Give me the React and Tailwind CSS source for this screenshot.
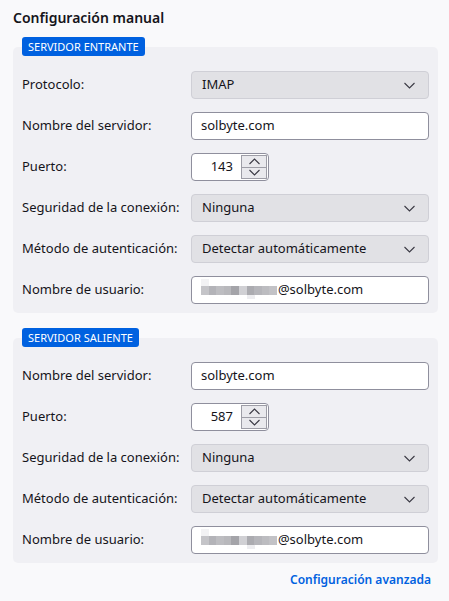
import React from "react";

const font = { fontFamily: '"Noto Sans", "Open Sans", sans-serif' };

function Chevron({ up = false, className = "" }) {
  return (
    <svg width="11" height="7" viewBox="0 0 11 7" className={className} fill="none">
      <path
        d={up ? "M0.5 6 L5.5 1 L10.5 6" : "M0.5 1 L5.5 6 L10.5 1"}
        stroke="#3a3944"
        strokeWidth="1.1"
      />
    </svg>
  );
}

function Select({ value }) {
  return (
    <div className="flex h-[28px] w-[238px] items-center justify-between rounded-[4px] border border-[#cfcfd6] bg-[#e1e1e5] pl-[10px] pr-[13px] text-[13px] text-[#15141a]">
      <span>{value}</span>
      <Chevron />
    </div>
  );
}

function TextInput({ children }) {
  return (
    <div className="flex h-[28px] w-[238px] items-center rounded-[4px] border border-[#8f8f9d] bg-white pl-[9px] text-[13px] text-[#15141a]">
      {children}
    </div>
  );
}

function NumberInput({ value }) {
  return (
    <div className="flex h-[28px] w-[78px] items-center rounded-[4px] border border-[#8f8f9d] bg-white">
      <span className="w-[41px] text-right text-[13px] text-[#15141a]">{value}</span>
      <div className="ml-[8px] flex h-[24px] w-[26px] flex-col border border-[#9d9da6]">
        <div className="flex flex-1 items-center justify-center border-b border-[#9d9da6] bg-[#e9e9ed]">
          <Chevron up />
        </div>
        <div className="flex flex-1 items-center justify-center bg-[#e9e9ed]">
          <Chevron />
        </div>
      </div>
    </div>
  );
}

// pixelated block standing in for the hidden local part of the address
function Masked() {
  const shades = ["#c4c4c8", "#b3b3b8", "#bdbdc1", "#b8b8bc", "#a4a4a9", "#d0d0d4", "#ababb0", "#b5b5ba", "#bcbcc0", "#c2c2c6"];
  return (
    <span className="relative mr-[1px] inline-flex h-[9px]">
      {shades.map((c, i) => (
        <span key={i} className="h-[9px] w-[7.6px]" style={{ backgroundColor: c }} />
      ))}
      <span className="absolute left-0 top-[-7px] h-[7px] w-[8px] bg-[#f2f2f4]" />
      <span className="absolute left-[46px] top-[9px] h-[4px] w-[8px] bg-[#ededf0]" />
    </span>
  );
}

function Row({ label, children }) {
  return (
    <div className="flex h-[28px] items-center">
      <div className="w-[169px] text-[13px] text-[#15141a]">{label}</div>
      {children}
    </div>
  );
}

function Group({ title, children, first }) {
  return (
    <section className={first ? "" : "mt-[15px]"}>
      <div className="relative z-10 ml-[22px] flex h-[19px] w-fit items-center rounded-[3px] bg-[#0061e0] px-[6px] text-[11px] leading-none text-white">
        {title}
      </div>
      <div className="-mt-[9px] ml-[13px] flex w-[425px] flex-col gap-[13px] rounded-[5px] bg-[#f0f0f4] pb-[9px] pl-[9px] pt-[24px]">
        {children}
      </div>
    </section>
  );
}

export default function App() {
  return (
    <div className="h-[601px] w-[449px] bg-[#f9f9fb] pt-[8px]" style={font}>
      <h1 className="ml-[13px] h-[20px] text-[14px] font-semibold leading-[20px] text-[#15141a]">
        Configuración manual
      </h1>
      <div className="mt-[9px]">
        <Group title="SERVIDOR ENTRANTE" first>
          <Row label="Protocolo:">
            <Select value="IMAP" />
          </Row>
          <Row label="Nombre del servidor:">
            <TextInput>solbyte.com</TextInput>
          </Row>
          <Row label="Puerto:">
            <NumberInput value="143" />
          </Row>
          <Row label="Seguridad de la conexión:">
            <Select value="Ninguna" />
          </Row>
          <Row label="Método de autenticación:">
            <Select value="Detectar automáticamente" />
          </Row>
          <Row label="Nombre de usuario:">
            <TextInput>
              <Masked />
              @solbyte.com
            </TextInput>
          </Row>
        </Group>
        <Group title="SERVIDOR SALIENTE">
          <Row label="Nombre del servidor:">
            <TextInput>solbyte.com</TextInput>
          </Row>
          <Row label="Puerto:">
            <NumberInput value="587" />
          </Row>
          <Row label="Seguridad de la conexión:">
            <Select value="Ninguna" />
          </Row>
          <Row label="Método de autenticación:">
            <Select value="Detectar automáticamente" />
          </Row>
          <Row label="Nombre de usuario:">
            <TextInput>
              <Masked />
              @solbyte.com
            </TextInput>
          </Row>
        </Group>
      </div>
      <div className="mr-[18px] mt-[8px] flex justify-end">
        <a className="text-[12px] font-semibold text-[#0061e0]">Configuración avanzada</a>
      </div>
    </div>
  );
}
